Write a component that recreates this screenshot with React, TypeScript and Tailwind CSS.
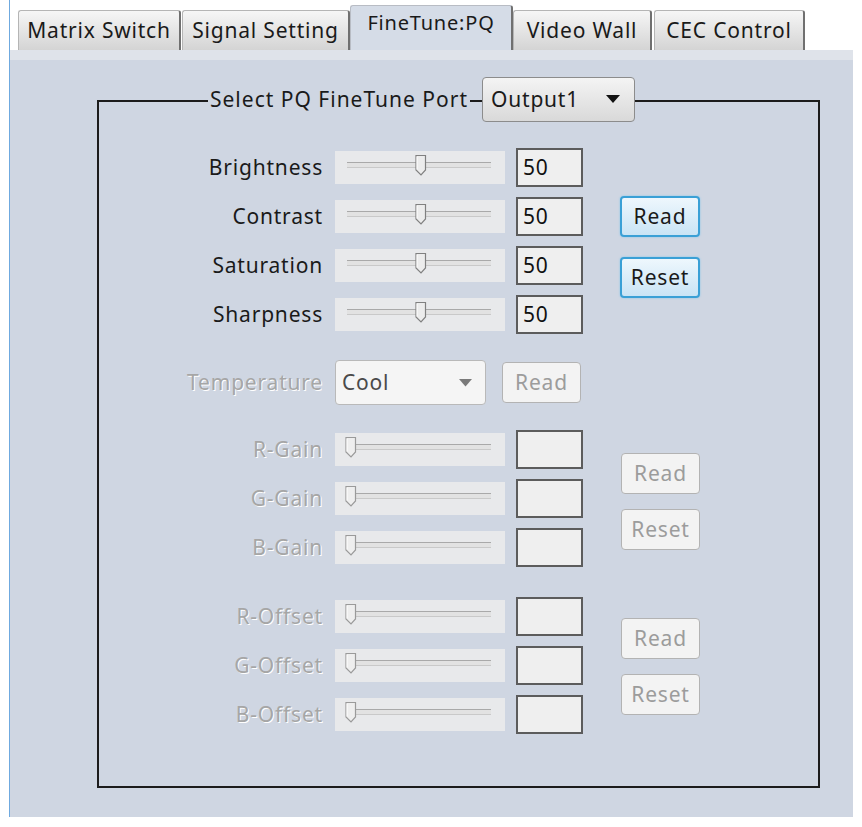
import React from "react";

const F = "font-['Noto_Sans',sans-serif] tracking-[0.8px]";

function Slider({ value, disabled }: { value: number; disabled?: boolean }) {
  const left = 9 + Math.round((value / 100) * 140);
  return (
    <div className="relative w-[170px] h-[33px] bg-[#e8e9eb]">
      <div className="absolute left-[12px] right-[14px] top-[11px] h-[6px] border-t border-t-[#a9a9a9] border-b border-b-[#c9c9c9] bg-[#e2e2e2]" />
      <svg
        className="absolute top-[3px]"
        style={{ left }}
        width="14"
        height="23"
        viewBox="0 0 14 23"
      >
        <path
          d="M2 1.5H11.5V16L7 21L2 16Z"
          fill={disabled ? "#eeeeee" : "#ececec"}
          stroke={disabled ? "#9a9a9a" : "#808080"}
          strokeWidth="1.2"
        />
        <path d="M3 2.5V15.5" stroke="#ffffff" strokeWidth="1" />
      </svg>
    </div>
  );
}

function NumBox({ value }: { value?: string }) {
  return (
    <div className="w-[67px] h-[39px] bg-[#efefef] border-2 border-[#5c5c5c] flex items-center pl-[5px] text-[21px] text-[#111] leading-none">
      {value}
    </div>
  );
}

function ActiveBtn({ label, className = "" }: { label: string; className?: string }) {
  return (
    <div
      className={`w-[80px] h-[41px] rounded-[4px] border-2 border-[#3aa0d6] bg-gradient-to-b from-[#eef7fd] to-[#c9e4f5] shadow-[0_0_2px_#7cc4ec] flex items-center justify-center text-[21px] text-[#1a1a1a] leading-none ${className}`}
    >
      {label}
    </div>
  );
}

function DisabledBtn({ label, className = "", w = "w-[79px]" }: { label: string; className?: string; w?: string }) {
  return (
    <div
      className={`${w} h-[41px] rounded-[4px] border border-[#b3b3b3] bg-[#f3f3f3] flex items-center justify-center text-[21px] text-[#9c9c9c] leading-none ${className}`}
    >
      {label}
    </div>
  );
}

function Label({ text, disabled }: { text: string; disabled?: boolean }) {
  return (
    <div
      className={`w-[224px] text-right text-[21px] leading-none whitespace-nowrap ${
        disabled ? "text-[#a6a6a6] [text-shadow:1px_1px_0_#ffffff]" : "text-[#1a1a1a]"
      }`}
    >
      {text}
    </div>
  );
}

function Row({ label, value, num, disabled }: { label: string; value: number; num?: string; disabled?: boolean }) {
  return (
    <div className="flex items-center h-[39px]">
      <Label text={label} disabled={disabled} />
      <div className="ml-[12px]">
        <Slider value={value} disabled={disabled} />
      </div>
      <div className="ml-[11px]">
        <NumBox value={num} />
      </div>
    </div>
  );
}

function Tab({ label, w, active }: { label: string; w: string; active?: boolean }) {
  if (active) {
    return (
      <div
        className={`${w} h-[45px] bg-[#d5dce7] border-t border-l border-[#b8bcc4] border-r-2 border-r-[#707070] rounded-t-[3px] flex justify-center pt-[7px] text-[20px] text-[#1a1a1a] leading-none whitespace-nowrap`}
      >
        {label}
      </div>
    );
  }
  return (
    <div
      className={`${w} h-[40px] bg-gradient-to-b from-[#f6f6f6] to-[#d4d4d4] border border-[#b5b5b5] border-r-2 border-r-[#707070] border-b-0 rounded-t-[3px] flex items-center justify-center text-[21px] text-[#1a1a1a] leading-none whitespace-nowrap`}
    >
      {label}
    </div>
  );
}

export default function App() {
  return (
    <div className={`w-[862px] h-[827px] bg-white ${F}`}>
      <div className="ml-[9px] w-[844px] h-[817px] border-l-[1.5px] border-[#6fa9df] flex flex-col">
        {/* tabs */}
        <div className="h-[50px] flex items-end pl-[8px]">
          <Tab label="Matrix Switch" w="w-[163px]" />
          <div className="w-[1px]" />
          <Tab label="Signal Setting" w="w-[168px]" />
          <Tab label="FineTune:PQ" w="w-[163px]" active />
          <Tab label="Video Wall" w="w-[139px]" />
          <div className="w-[2px]" />
          <Tab label="CEC Control" w="w-[151px]" />
        </div>
        <div className="h-[10px] bg-[#dfe3ea]" />
        {/* panel */}
        <div className="flex-1 bg-[#cfd6e2] pt-[40px] pl-[87px]">
          <div className="relative w-[723px] h-[688px] border-2 border-[#1c1c1c]">
            {/* legend */}
            <div className="absolute left-[109px] top-[-25px] flex items-center gap-[12px]">
              <div className="bg-[#cfd6e2] px-[2px] text-[21px] tracking-[1px] text-[#1a1a1a] leading-none py-[2px] whitespace-nowrap">
                Select PQ FineTune Port
              </div>
              <div className="w-[153px] h-[45px] rounded-[4px] border border-[#8c8c8c] bg-gradient-to-b from-[#f4f4f4] to-[#d9d9d9] flex items-center justify-between pl-[8px] pr-[14px] text-[21px] text-[#1a1a1a] leading-none">
                <span>Output1</span>
                <svg width="14" height="9" viewBox="0 0 14 9">
                  <path d="M0 0H14L7 8Z" fill="#111" />
                </svg>
              </div>
            </div>

            <div className="flex flex-col pt-[46px]">
              {/* section 1 */}
              <div className="flex">
                <div className="flex flex-col gap-[10px]">
                  <Row label="Brightness" value={50} num="50" />
                  <Row label="Contrast" value={50} num="50" />
                  <Row label="Saturation" value={50} num="50" />
                  <Row label="Sharpness" value={50} num="50" />
                </div>
                <div className="ml-[37px] flex flex-col pt-[48px] gap-[20px]">
                  <ActiveBtn label="Read" />
                  <ActiveBtn label="Reset" />
                </div>
              </div>

              {/* temperature */}
              <div className="flex items-center h-[45px] mt-[26px]">
                <Label text="Temperature" disabled />
                <div className="ml-[12px] w-[151px] h-[45px] rounded-[4px] border border-[#b9b9b9] bg-[#f5f5f5] flex items-center justify-between pl-[6px] pr-[13px] text-[21px] text-[#4a4a4a] leading-none">
                  <span>Cool</span>
                  <svg width="13" height="8" viewBox="0 0 13 8">
                    <path d="M0 0H13L6.5 7.5Z" fill="#7a7a7a" />
                  </svg>
                </div>
                <DisabledBtn label="Read" className="ml-[16px]" />
              </div>

              {/* gain */}
              <div className="flex mt-[25px]">
                <div className="flex flex-col gap-[10px]">
                  <Row label="R-Gain" value={0} disabled />
                  <Row label="G-Gain" value={0} disabled />
                  <Row label="B-Gain" value={0} disabled />
                </div>
                <div className="ml-[38px] flex flex-col pt-[23px] gap-[15px]">
                  <DisabledBtn label="Read" />
                  <DisabledBtn label="Reset" />
                </div>
              </div>

              {/* offset */}
              <div className="flex mt-[30px]">
                <div className="flex flex-col gap-[10px]">
                  <Row label="R-Offset" value={0} disabled />
                  <Row label="G-Offset" value={0} disabled />
                  <Row label="B-Offset" value={0} disabled />
                </div>
                <div className="ml-[38px] flex flex-col pt-[21px] gap-[15px]">
                  <DisabledBtn label="Read" />
                  <DisabledBtn label="Reset" />
                </div>
              </div>
            </div>
          </div>
        </div>
      </div>
    </div>
  );
}
